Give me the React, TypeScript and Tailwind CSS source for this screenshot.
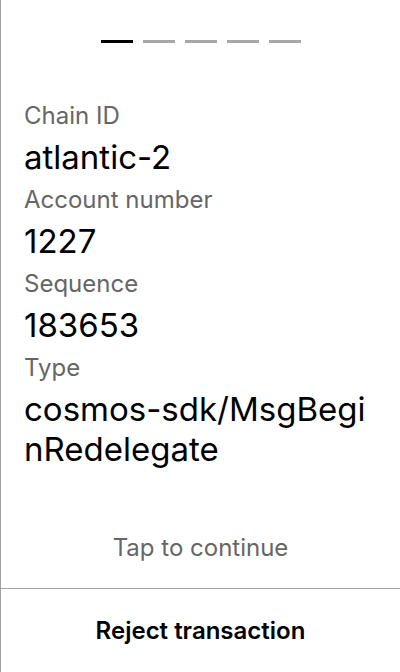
import React from "react";

const rows = [
  { label: "Chain ID", value: "atlantic-2" },
  { label: "Account number", value: "1227" },
  { label: "Sequence", value: "183653" },
  { label: "Type", value: "cosmos-sdk/MsgBeginRedelegate" },
];

export default function App() {
  return (
    <div
      className="w-[400px] h-[672px] bg-white flex flex-col border-l border-[#a3a3a3]"
      style={{ fontFamily: "Inter, 'Noto Sans', sans-serif" }}
    >
      <div className="flex justify-center gap-[10px] pt-[40px]">
        <div className="w-[32px] h-[3px] bg-black" />
        <div className="w-[32px] h-[3px] bg-[#a8a8a8]" />
        <div className="w-[32px] h-[3px] bg-[#a8a8a8]" />
        <div className="w-[32px] h-[3px] bg-[#a8a8a8]" />
        <div className="w-[32px] h-[3px] bg-[#a8a8a8]" />
      </div>
      <div className="flex flex-col px-[23px] pt-[52px]">
        {rows.map((r) => (
          <div key={r.label} className="flex flex-col mb-[2px]">
            <div className="text-[24px] leading-[42px] text-[#666666]">{r.label}</div>
            <div className="text-[33px] leading-[40px] text-black break-all">{r.value}</div>
          </div>
        ))}
      </div>
      <div className="flex-1" />
      <div className="text-center text-[24px] leading-[42px] text-[#666666] pb-[19px]">
        Tap to continue
      </div>
      <div className="border-t border-[#a3a3a3] h-[84px] flex items-center justify-center pt-[1px]">
        <span className="text-[24px] font-semibold text-black">Reject transaction</span>
      </div>
    </div>
  );
}
